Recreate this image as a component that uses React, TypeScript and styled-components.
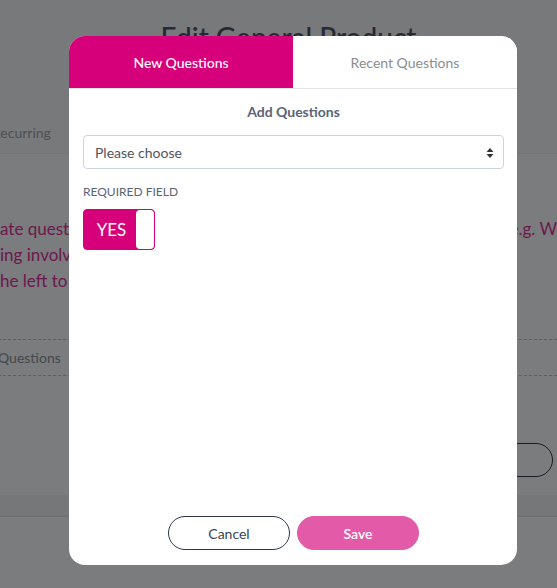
import styled, { createGlobalStyle } from "styled-components";
import { useState } from "react";

const GlobalStyle = createGlobalStyle`
  html, body {
    margin: 0;
    padding: 0;
  }
  body {
    font-family: Lato, "Open Sans", "Liberation Sans", sans-serif;
    background: #f6f8fc;
  }
  * {
    box-sizing: border-box;
  }
`;

const Page = styled.div`
  position: relative;
  width: 557px;
  height: 588px;
  overflow: hidden;
  background: #f6f8fc;
`;

const Header = styled.div`
  background: #f1f3f7;
  padding-top: 20px;
  height: 154px;
  border-bottom: 1px solid #e6e8ec;
  display: flex;
  flex-direction: column;
  justify-content: space-between;
`;

const Title = styled.h1`
  margin: 0;
  text-align: center;
  font-size: 28px;
  font-weight: 500;
  color: #4a5568;
  padding-left: 20px;
`;

const SubTab = styled.div`
  font-size: 14px;
  color: #9aa0a8;
  margin-left: -8px;
  padding-bottom: 12px;
`;

const Intro = styled.div`
  padding-top: 62px;
  display: flex;
  flex-direction: column;
`;

const IntroLine = styled.div`
  display: flex;
  justify-content: space-between;
  font-size: 17px;
  line-height: 26px;
  color: #d8359b;
  white-space: nowrap;
`;

const Section = styled.div`
  margin-top: 45px;
  border-top: 1px dashed #b8bcc4;
  border-bottom: 1px dashed #b8bcc4;
  padding: 9px 0 9px;
  font-size: 14px;
  color: #8a9098;
  margin-left: -2px;
`;

const ActionRow = styled.div`
  display: flex;
  justify-content: flex-end;
  padding: 67px 4px 0 0;
`;

const GhostButton = styled.div`
  width: 160px;
  height: 34px;
  border: 1px solid #2d3748;
  border-radius: 17px;
`;

const Footer = styled.div`
  margin-top: 18px;
  height: 22px;
  background: #eceef2;
  border-bottom: 1px solid #d9dce2;
`;

const Overlay = styled.div`
  position: absolute;
  inset: 0;
  background: rgba(0, 0, 0, 0.5);
  display: flex;
  align-items: flex-start;
  padding: 36px 0 0 69px;
`;

const Modal = styled.div`
  width: 448px;
  height: 529px;
  background: #fff;
  border-radius: 16px;
  overflow: hidden;
  display: flex;
  flex-direction: column;
`;

const Tabs = styled.div`
  display: grid;
  grid-template-columns: 224px 1fr;
  height: 53px;
  border-bottom: 1px solid #e2e4e8;
`;

const Tab = styled.button<{ $active?: boolean }>`
  border: none;
  margin: 0;
  font-family: inherit;
  font-size: 14px;
  cursor: pointer;
  background: ${({ $active }) => ($active ? "#d6007a" : "#fff")};
  color: ${({ $active }) => ($active ? "#fff" : "#8a8d92")};
  font-weight: ${({ $active }) => ($active ? 500 : 400)};
  padding-top: 2px;
`;

const Body = styled.div`
  flex: 1;
  padding: 14px 13px 0 14px;
  display: flex;
  flex-direction: column;
`;

const SectionTitle = styled.div`
  text-align: center;
  font-size: 14px;
  font-weight: 700;
  color: #5a6478;
  margin-bottom: 15px;
`;

const SelectBox = styled.div`
  position: relative;
  height: 34px;
  border: 1px solid #cfd4dc;
  border-radius: 4px;
  display: flex;
  align-items: center;
  padding: 0 11px;
  font-size: 14px;
  color: #50555c;
`;

const Arrows = styled.svg`
  position: absolute;
  right: 9px;
  top: 11px;
`;

const FieldLabel = styled.div`
  margin-top: 15px;
  font-size: 12px;
  color: #5a6478;
  text-transform: uppercase;
`;

const Toggle = styled.button`
  margin-top: 10px;
  width: 72px;
  height: 41px;
  border: 1px solid #d6007a;
  border-radius: 4px;
  background: #d6007a;
  padding: 0;
  display: flex;
  align-items: stretch;
  cursor: pointer;
  font-family: inherit;
`;

const ToggleText = styled.span`
  flex: 1;
  display: flex;
  align-items: center;
  justify-content: center;
  color: #fff;
  font-size: 17px;
  font-weight: 400;
  padding-left: 3px;
`;

const Knob = styled.span`
  width: 18px;
  background: #fff;
  border-radius: 4px;
`;

const Buttons = styled.div`
  display: flex;
  justify-content: center;
  gap: 7px;
  padding-bottom: 15px;
  margin-top: auto;
`;

const PillButton = styled.button<{ $primary?: boolean }>`
  width: 122px;
  height: 34px;
  border-radius: 17px;
  font-family: inherit;
  font-size: 14px;
  cursor: pointer;
  border: 1px solid ${({ $primary }) => ($primary ? "#e35ba8" : "#2d3748")};
  background: ${({ $primary }) => ($primary ? "#e35ba8" : "#fff")};
  color: ${({ $primary }) => ($primary ? "#fff" : "#3a4456")};
  font-weight: ${({ $primary }) => ($primary ? 600 : 400)};
`;

export default function App() {
  const [tab, setTab] = useState<"new" | "recent">("new");
  const [required, setRequired] = useState(true);

  return (
    <Page>
      <GlobalStyle />
      <Header>
        <Title>Edit General Product</Title>
        <SubTab>Recurring</SubTab>
      </Header>
      <Intro>
        <IntroLine>
          <span>ate quest</span>
          <span>e.g. W</span>
        </IntroLine>
        <IntroLine>
          <span>ing involv</span>
        </IntroLine>
        <IntroLine>
          <span>he left to</span>
        </IntroLine>
      </Intro>
      <Section>Questions</Section>
      <ActionRow>
        <GhostButton />
      </ActionRow>
      <Footer />

      <Overlay>
        <Modal>
          <Tabs>
            <Tab $active={tab === "new"} onClick={() => setTab("new")}>
              New Questions
            </Tab>
            <Tab $active={tab === "recent"} onClick={() => setTab("recent")}>
              Recent Questions
            </Tab>
          </Tabs>
          <Body>
            <SectionTitle>Add Questions</SectionTitle>
            <SelectBox>
              Please choose
              <Arrows width="8" height="12" viewBox="0 0 8 12">
                <path d="M4 1 L7.5 5 H0.5 Z" fill="#333" />
                <path d="M4 11 L7.5 7 H0.5 Z" fill="#333" />
              </Arrows>
            </SelectBox>
            <FieldLabel>Required field</FieldLabel>
            <div>
              <Toggle onClick={() => setRequired(!required)}>
                <ToggleText>{required ? "YES" : "NO"}</ToggleText>
                <Knob />
              </Toggle>
            </div>
            <Buttons>
              <PillButton>Cancel</PillButton>
              <PillButton $primary>Save</PillButton>
            </Buttons>
          </Body>
        </Modal>
      </Overlay>
    </Page>
  );
}
